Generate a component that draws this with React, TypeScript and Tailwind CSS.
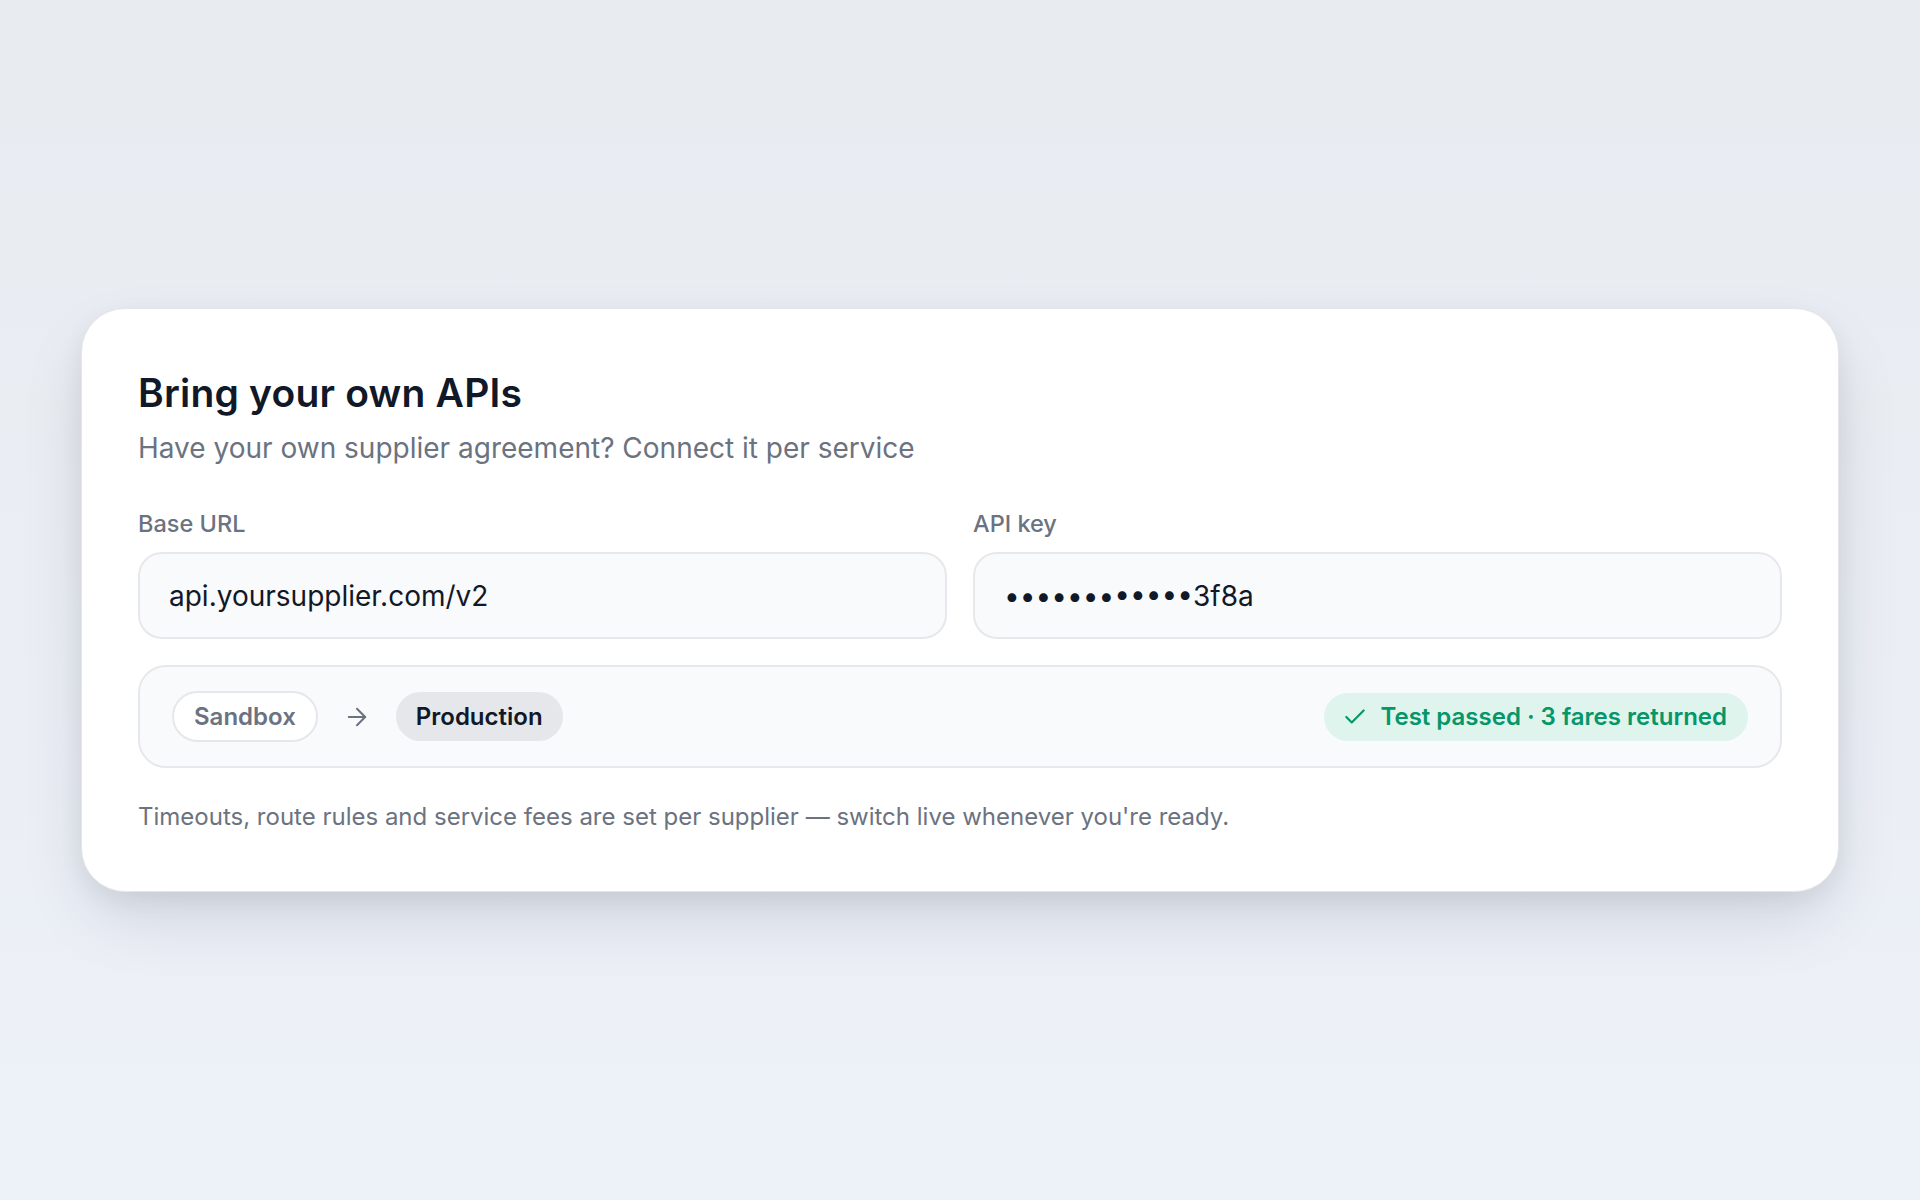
import React from "react";
import { ArrowRight, Check } from "lucide-react";

export default function App() {
  return (
    <div
      className="flex min-h-screen w-full items-center justify-center bg-gradient-to-b from-[#e8ebf0] to-[#edf1f8] px-[81px]"
      style={{ fontFamily: "Inter, 'Noto Sans', 'Liberation Sans', sans-serif" }}
    >
      <div className="w-full rounded-[44px] border border-[#e3e6eb] bg-white px-14 pb-[58px] pt-14 shadow-[0_8px_24px_rgba(15,23,42,0.06),0_30px_70px_-10px_rgba(15,23,42,0.14)]">
        <h1 className="text-[39px] font-semibold leading-[55px] tracking-[0.2px] text-[#111827]">
          Bring your own APIs
        </h1>
        <p className="mt-2 text-[28px] leading-[40.5px] text-[#6b7280]">
          Have your own supplier agreement? Connect it per service
        </p>

        <div className="mt-[39px] grid grid-cols-2 gap-[26px]">
          <div className="flex flex-col">
            <label className="text-[23.5px] font-medium leading-[31.5px] text-[#6b7280]">Base URL</label>
            <div className="mt-[13px] flex h-[87px] items-center rounded-[24px] border-2 border-[#e6e8ec] bg-[#f9fafb] pl-[29px] text-[28px] text-[#111827]">
              api.yoursupplier.com/v2
            </div>
          </div>
          <div className="flex flex-col">
            <label className="text-[23.5px] font-medium leading-[31.5px] text-[#6b7280]">API key</label>
            <div className="mt-[13px] flex h-[87px] items-center rounded-[24px] border-2 border-[#e6e8ec] bg-[#f9fafb] pl-[29px] text-[28px] text-[#111827]">
              ••••••••••••3f8a
            </div>
          </div>
        </div>

        <div className="mt-[26px] flex h-[103px] items-center justify-between rounded-[28px] border-2 border-[#e6e8ec] bg-[#f9fafb] px-[32px]">
          <div className="flex items-center gap-[25px]">
            <span className="flex h-[51px] items-center rounded-full border-2 border-[#e5e7eb] bg-white px-[20px] text-[24px] font-semibold text-[#6b7280]">
              Sandbox
            </span>
            <ArrowRight size={28} strokeWidth={1.75} className="text-[#6b7280]" />
            <span className="flex h-[49px] items-center rounded-full bg-[#e5e7eb] px-5 text-[24px] font-semibold text-[#111827]">
              Production
            </span>
          </div>
          <div className="flex h-[48px] items-center gap-3 rounded-full bg-[#dff4ec] pl-[18px] pr-[21px] text-[24px] font-semibold text-[#059669]">
            <Check size={26} strokeWidth={2} />
            <span>Test passed · 3 fares returned</span>
          </div>
        </div>

        <p className="mt-[32px] text-[24px] leading-[33px] text-[#6b7280]">
          Timeouts, route rules and service fees are set per supplier — switch live whenever you're ready.
        </p>
      </div>
    </div>
  );
}
